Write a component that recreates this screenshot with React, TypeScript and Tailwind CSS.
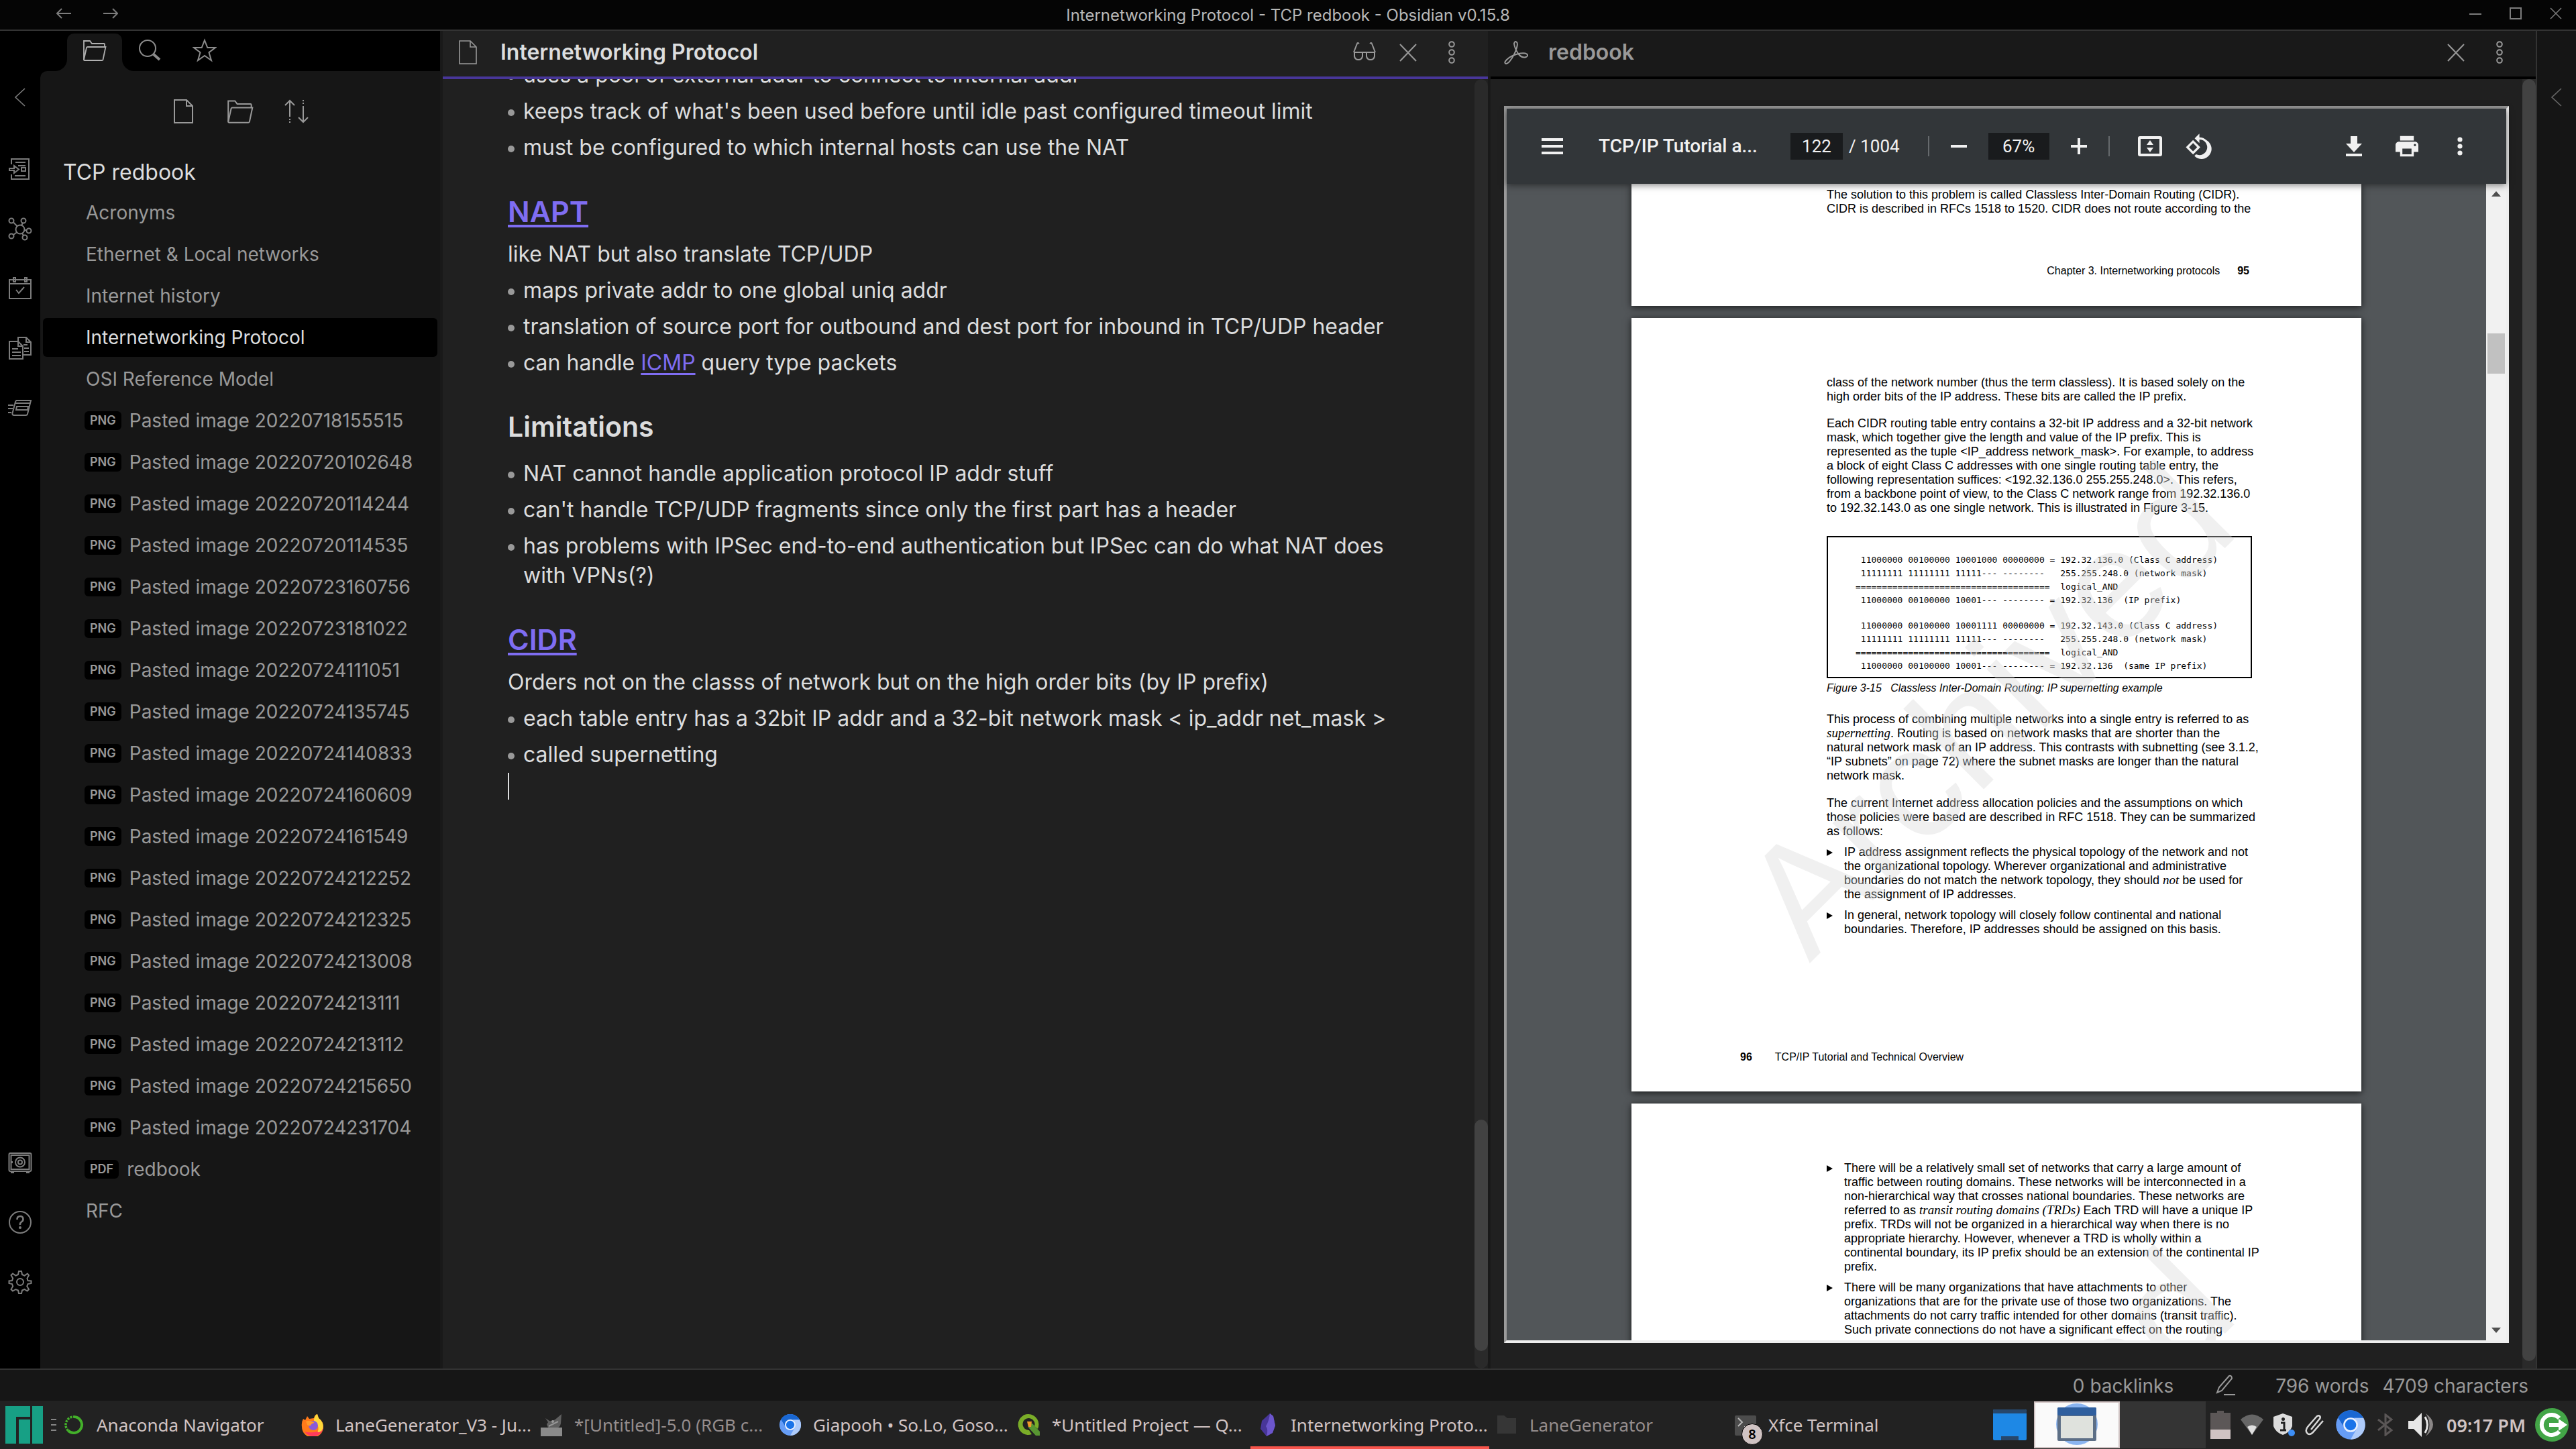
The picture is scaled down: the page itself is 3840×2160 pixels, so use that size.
import type { ReactNode } from "react";

const inter = "font-['Inter','Noto_Sans',sans-serif]";

/* ---------- line icons ---------- */

function Line({ children, size = 36, width = 2 }: { children: ReactNode; size?: number; width?: number }) {
  return (
    <svg
      width={size}
      height={size}
      viewBox="0 0 36 36"
      fill="none"
      stroke="currentColor"
      strokeWidth={width}
      aria-hidden="true"
      className="shrink-0"
    >
      {children}
    </svg>
  );
}

const FolderIcon = ({ size = 36 }: { size?: number }) => (
  <Line size={size} width={1.8}>
    <path d="M2 32V4h9l3 4h18q1 0 1 2v3" />
    <path d="M2 32 6 14q.3-1 1.500-1H34.500l-4 19q-.3 1-1.500 1H3q-1 0-1-1z" />
  </Line>
);
const SearchIcon = () => (
  <Line>
    <circle cx="15" cy="15" r="12" />
    <path d="M24 24l9 8" strokeWidth="4" />
  </Line>
);
const StarIcon = () => (
  <Line>
    <path d="M18 3l4.300 11H34l-9.500 7.200L28 33l-10-7-10 7 3.500-11.800L2 14h11.700z" />
  </Line>
);
const FileIcon = () => (
  <Line>
    <path d="M4 1h18l9 9v25H4z" />
    <path d="M22 1v9h9" />
  </Line>
);
const NoteIcon = () => (
  <Line width={1.6}>
    <path d="M5 1h16l9 9v25H5z" />
    <path d="M21 1v9h9" />
  </Line>
);
const SortIcon = () => (
  <Line>
    <path d="M8 2v24M8 29v2M8 33v2M1 9l7-7 7 7" />
    <path d="M28 34V10M28 7V5M28 3V1M21 27l7 7 7-7" />
  </Line>
);
const ChevronLeft = () => (
  <Line width={1.6}>
    <path d="M25 5 11 18l14 13" />
  </Line>
);
const QuickSwitchIcon = () => (
  <Line>
    <path d="M5 11V3h26v30H5v-7" />
    <path d="M11 8h15M15 13h11M10 28h16M2 17h7v-4l7 5.500-7 5.500v-4H2z" />
    <path d="M20 16h6v5h-6z" />
  </Line>
);
const GraphIcon = () => (
  <Line>
    <circle cx="18" cy="19" r="6.500" />
    <circle cx="5" cy="6" r="3.500" />
    <circle cx="23" cy="6" r="3.500" />
    <circle cx="5" cy="29" r="3.500" />
    <circle cx="31" cy="21" r="3.500" />
    <circle cx="25" cy="31" r="3.500" />
    <path d="M8 8.500l5.500 5.500M20 13l2-3.500M8 27l5.500-4M24.500 20h3M21 25l2 3" />
  </Line>
);
const DailyIcon = () => (
  <Line>
    <path d="M2 5h32v28H2zM2 11h32" />
    <path d="M8 2h3v6H8zM25 2h3v6h-3z" />
    <path d="M12 20l4 5 8-9" />
  </Line>
);
const TemplateIcon = () => (
  <Line>
    <path d="M2 8h13l7 7v19H2zM15 8v7h7" />
    <path d="M15 8V2h12l7 7v19H22M27 2v7h7" />
    <path d="M6 19h9M6 24h13M6 29h13M23 13h6M24 18h7M24 23h7" />
  </Line>
);
const CardsIcon = () => (
  <Line>
    <path d="M12 7h22l-5 20q-.5 2-2.500 2H9q-3 0-2.500-3L11 9q.5-2 2-2" />
    <path d="M11 11h22M13 16h17l-1 5H12z" />
    <path d="M0 14h8M0 19h7M0 25h5" />
  </Line>
);
const VaultIcon = () => (
  <Line>
    <rect x="1.500" y="4" width="33" height="27" rx="2" />
    <rect x="4.500" y="7" width="27" height="21" />
    <circle cx="18" cy="17.500" r="7" />
    <circle cx="18" cy="17.500" r="3" />
    <path d="M5 31v2h4M31 31v2h-4M6 16v3" />
  </Line>
);
const HelpIcon = () => (
  <Line>
    <circle cx="18" cy="18" r="16" />
    <path d="M13.500 14q0-5 4.500-5t4.500 4.500q0 2.500-2.500 4t-2 4.500" strokeWidth="2.600" />
    <circle cx="18" cy="26" r="1" fill="currentColor" />
  </Line>
);
const GearIcon = () => (
  <Line>
    <path d="M16 2h4l1 5 3.500 1.500L29 5.500l2 2.500-2.500 4.500L29.500 16l5 .5v3.500l-5 1-1.200 3.500L31 29l-2.500 2.500-4-2.500L21 30.500 20 35h-4l-1-4.500L11.500 29 7 31.500 4.500 29l2.700-4.500L6 21l-4.500-1v-3.500L6 16l1.200-3.500L4.500 8 7 5.500l4.500 3L15 7z" />
    <circle cx="18" cy="18" r="5" />
  </Line>
);
const GlassesIcon = () => (
  <Line>
    <path d="M2 18 7 5q.5-2 3 0M34 18 29 5q-.5-2-3 0M2 18h32" />
    <path d="M3 18h12v6q-1 5-6 5t-6-5zM21 18h12v6q-1 5-6 5t-6-5z" />
  </Line>
);
const CloseIcon = () => (
  <Line>
    <path d="M6 6l24 25M30 6 6 31" />
  </Line>
);
const DotsIcon = () => (
  <Line>
    <circle cx="18" cy="6" r="3.800" />
    <circle cx="18" cy="18" r="3.800" />
    <circle cx="18" cy="30" r="3.800" />
  </Line>
);
const PdfIcon = () => (
  <Line>
    <path d="M15 5q1-4 3.500-2.500Q21 4 19 11 16 22 8 32q-4 4-6 2.500T4 29q6-6 16-8.500 10-2.500 14 0 2.500 2.500-1 4.500-6 2-11-4Q16 13 15 5z" />
  </Line>
);
const PencilIcon = () => (
  <Line>
    <path d="M6 28 9 20 24 3q4-1 4 4L13 25zM16 31h17" />
  </Line>
);

/* ---------- sidebar ---------- */

function RibbonButton({ label, children }: { label: string; children: ReactNode }) {
  return (
    <button aria-label={label} className="flex h-9 w-9 items-center justify-center">
      {children}
    </button>
  );
}

function Ribbon() {
  return (
    <nav aria-label="Ribbon" className="flex w-[60px] shrink-0 flex-col items-center bg-black pt-[81px] pb-[111px] text-[#7c7c7c]">
      <RibbonButton label="Collapse sidebar"><ChevronLeft /></RibbonButton>
      <div className="mt-[71px] flex flex-col gap-[53px]">
        <RibbonButton label="Open quick switcher"><QuickSwitchIcon /></RibbonButton>
        <RibbonButton label="Open graph view"><GraphIcon /></RibbonButton>
        <RibbonButton label="Open daily note"><DailyIcon /></RibbonButton>
        <RibbonButton label="Insert template"><TemplateIcon /></RibbonButton>
        <RibbonButton label="Flashcards"><CardsIcon /></RibbonButton>
      </div>
      <div className="mt-auto flex flex-col gap-[53px]">
        <RibbonButton label="Open another vault"><VaultIcon /></RibbonButton>
        <RibbonButton label="Help"><HelpIcon /></RibbonButton>
        <RibbonButton label="Settings"><GearIcon /></RibbonButton>
      </div>
    </nav>
  );
}

type Entry = { name: string; tag?: string; active?: boolean };

const entries: Entry[] = [
  { name: "Acronyms" },
  { name: "Ethernet & Local networks" },
  { name: "Internet history" },
  { name: "Internetworking Protocol", active: true },
  { name: "OSI Reference Model" },
  ...[
    "20220718155515", "20220720102648", "20220720114244", "20220720114535", "20220723160756", "20220723181022",
    "20220724111051", "20220724135745", "20220724140833", "20220724160609", "20220724161549", "20220724212252",
    "20220724212325", "20220724213008", "20220724213111", "20220724213112", "20220724215650", "20220724231704",
  ].map((id) => ({ name: `Pasted image ${id}`, tag: "PNG" })),
  { name: "redbook", tag: "PDF" },
  { name: "RFC" },
];

function Sidebar() {
  return (
    <aside className="flex w-[596px] shrink-0 flex-col bg-black">
      <div role="tablist" className="flex h-[60px] shrink-0 items-end pl-10 text-[#8c8c8c]">
        <button role="tab" aria-selected="true" aria-label="Files" className="relative flex h-14 w-[82px] items-center justify-center rounded-t-[10px] bg-[#161616] pb-1.5 text-[#b0b0b0]">
          <FolderIcon />
          <svg aria-hidden="true" className="absolute bottom-0 -left-[18px]" width="18" height="18"><path d="M18 0v18H0A18 18 0 0 0 18 0z" fill="#161616" /></svg>
          <svg aria-hidden="true" className="absolute -right-[18px] bottom-0" width="18" height="18"><path d="M0 0v18h18A18 18 0 0 1 0 0z" fill="#161616" /></svg>
        </button>
        <button role="tab" aria-selected="false" aria-label="Search" className="flex h-14 w-[82px] items-center justify-center pb-1.5"><SearchIcon /></button>
        <button role="tab" aria-selected="false" aria-label="Starred" className="flex h-14 w-[82px] items-center justify-center pb-1.5"><StarIcon /></button>
      </div>
      <div className="flex grow flex-col rounded-tl-[10px] bg-[#161616] px-1">
        <div className="flex justify-center gap-11 pt-10 text-[#999999]">
          <button aria-label="New note" className="flex h-10 w-10 items-center justify-center"><FileIcon /></button>
          <button aria-label="New folder" className="flex h-10 w-10 items-center justify-center"><FolderIcon size={40} /></button>
          <button aria-label="Change sort order" className="flex h-10 w-10 items-center justify-center"><SortIcon /></button>
        </div>
        <h2 className="mt-[51px] mb-[11px] pl-[30px] text-[32px] leading-10 text-[#dcddde]">TCP redbook</h2>
        <ul className="flex flex-col gap-1">
          {entries.map((e) => (
            <li key={e.name}>
              <a
                href="#"
                className={
                  e.active
                    ? "flex h-[58px] items-center rounded-md bg-black pl-16 text-[28px] text-[#dcddde]"
                    : "flex h-[58px] items-center rounded-md pl-16 text-[28px] text-[#999999]"
                }
              >
                {e.tag && (
                  <span className="mr-3 -ml-0.5 rounded-md bg-black px-2 text-[18px] leading-7 font-semibold">{e.tag}</span>
                )}
                {e.name}
              </a>
            </li>
          ))}
        </ul>
      </div>
    </aside>
  );
}

/* ---------- editor ---------- */

function PaneActions({ children }: { children: ReactNode }) {
  return <div className="ml-auto flex gap-[29px] text-[#999999]">{children}</div>;
}

function Item({ children }: { children: ReactNode }) {
  return (
    <li className="flex py-[5px] whitespace-nowrap">
      <span aria-hidden="true" className="mt-[19px] mr-[13px] h-2.5 w-2.5 shrink-0 rounded-full bg-[#999999]" />
      <span>{children}</span>
    </li>
  );
}

function Heading({ children }: { children: ReactNode }) {
  return (
    <h2 className="mt-[37px] mb-[6px] text-[43px] leading-[62px] font-semibold">
      <a href="#" className="text-[#7f6df2] underline decoration-4 underline-offset-4">{children}</a>
    </h2>
  );
}

function Editor() {
  return (
    <section className="flex min-w-0 flex-1 flex-col bg-[#202020]">
      <header className="flex h-[72px] shrink-0 items-center border-b-4 border-[#483699] pr-9 pb-1 pl-5 text-[#999999]">
        <NoteIcon />
        <h1 className="ml-[30px] text-[32px] leading-10 font-semibold text-[#dcddde]">Internetworking Protocol</h1>
        <PaneActions>
          <button aria-label="Reading view"><GlassesIcon /></button>
          <button aria-label="Close note"><CloseIcon /></button>
          <button aria-label="More options"><DotsIcon /></button>
        </PaneActions>
      </header>
      <div className="flex grow overflow-hidden">
        <article className="-mt-[33px] min-w-0 flex-1 pl-[97px] text-[32px] leading-[44px] text-[#dcddde]">
          <ul>
            <Item>uses a pool of external addr to connect to internal addr</Item>
            <Item>keeps track of what's been used before until idle past configured timeout limit</Item>
            <Item>must be configured to which internal hosts can use the NAT</Item>
          </ul>
          <Heading>NAPT</Heading>
          <p className="py-[5px]">like NAT but also translate TCP/UDP</p>
          <ul>
            <Item>maps private addr to one global uniq addr</Item>
            <Item>translation of source port for outbound and dest port for inbound in TCP/UDP header</Item>
            <Item>
              can handle <a href="#" className="text-[#7f6df2] underline decoration-3 underline-offset-4">ICMP</a> query type packets
            </Item>
          </ul>
          <h3 className="mt-10 mb-[15px] text-[41px] leading-[56px] font-semibold">Limitations</h3>
          <ul>
            <Item>NAT cannot handle application protocol IP addr stuff</Item>
            <Item>can't handle TCP/UDP fragments since only the first part has a header</Item>
            <Item>
              has problems with IPSec end-to-end authentication but IPSec can do what NAT does
              <br />
              with VPNs(?)
            </Item>
          </ul>
          <Heading>CIDR</Heading>
          <p className="py-[5px]">Orders not on the classs of network but on the high order bits (by IP prefix)</p>
          <ul>
            <Item>each table entry has a 32bit IP addr and a 32-bit network mask &lt; ip_addr net_mask &gt;</Item>
            <Item>called supernetting</Item>
          </ul>
          <div aria-hidden="true" className="h-10 w-0.5 bg-[#dcddde]" />
        </article>
        <div aria-hidden="true" className="flex w-5 flex-col justify-end rounded-full bg-[#2a2a2a] pb-[26px]">
          <div className="h-[345px] rounded-full bg-[#424242]" />
        </div>
      </div>
    </section>
  );
}

/* ---------- PDF viewer ---------- */

function ToolButton({ label, children }: { label: string; children: ReactNode }) {
  return (
    <button aria-label={label} className="flex h-12 w-12 shrink-0 items-center justify-center">
      <svg width="48" height="48" viewBox="0 0 24 24" fill="currentColor" aria-hidden="true">{children}</svg>
    </button>
  );
}

function Toolbar() {
  return (
    <div className="relative z-10 flex h-28 shrink-0 items-center bg-[#323639] pr-[45px] pl-11 font-['Roboto',sans-serif] text-[26px] text-[#f1f1f1] shadow-[0_2px_10px_rgba(0,0,0,0.5)]">
      <ToolButton label="Menu"><path d="M4 6h16v2H4zM4 11h16v2H4zM4 16h16v2H4z" /></ToolButton>
      <span className="ml-[45px] w-[286px] truncate text-[28px] font-medium">TCP/IP Tutorial a...</span>
      <input aria-label="Page number" defaultValue="122" className="h-10 w-[78px] bg-[#191b1d] text-center" />
      <span className="ml-[9px]">/ 1004</span>
      <span aria-hidden="true" className="ml-[42px] h-[30px] w-0.5 bg-[#666a6d]" />
      <span className="w-5" />
      <ToolButton label="Zoom out"><path d="M6 11h12v2H6z" /></ToolButton>
      <input aria-label="Zoom level" defaultValue="67%" className="ml-5 h-10 w-[91px] bg-[#191b1d] text-center" />
      <span className="w-5" />
      <ToolButton label="Zoom in"><path d="M11 6h2v5h5v2h-5v5h-2v-5H6v-2h5z" /></ToolButton>
      <span aria-hidden="true" className="ml-5 h-[30px] w-0.5 bg-[#666a6d]" />
      <span className="w-9" />
      <ToolButton label="Fit to page"><path d="M4.500 4.500h15q1.500 0 1.500 1.500v12q0 1.500-1.500 1.500h-15Q3 19.500 3 18V6q0-1.500 1.500-1.500zM5 6.500v11h14v-11zM12 7.500l2.500 3.500h-5zM12 16.500 9.500 13h5z" /></ToolButton>
      <span className="w-6" />
      <ToolButton label="Rotate">
        <g transform="translate(2 2) scale(0.83)">
          <path d="M7.340 6.410.860 12.900l6.490 6.480 6.490-6.480zM3.690 12.900l3.660-3.660L11 12.900l-3.660 3.660zM19.360 6.640A8.950 8.950 0 0 0 13 4V.760L8.760 5 13 9.240V6a7 7 0 1 1-2.980 13.320l-1.490 1.490A9 9 0 1 0 19.360 6.640z" />
        </g>
      </ToolButton>
      <div className="ml-auto flex gap-[31px]">
        <ToolButton label="Download"><path d="M18 10h-3.500V4.500h-5V10H6l6 6.500zM6 17.500v2h12v-2z" /></ToolButton>
        <ToolButton label="Print">
          <g transform="translate(1.8 1.8) scale(0.85)">
            <path d="M19 8H5c-1.660 0-3 1.340-3 3v6h4v4h12v-4h4v-6c0-1.660-1.340-3-3-3zm-3 11H8v-5h8zm3-7a1 1 0 1 1 0-2 1 1 0 0 1 0 2zM18 3H6v4h12z" />
          </g>
        </ToolButton>
        <ToolButton label="More"><circle cx="12" cy="7" r="1.800" /><circle cx="12" cy="12" r="1.800" /><circle cx="12" cy="17" r="1.800" /></ToolButton>
      </div>
    </div>
  );
}

function Watermark() {
  return (
    <div aria-hidden="true" className="pointer-events-none absolute top-[583px] left-[530px] flex h-0 w-0 items-center justify-center">
      <span className="-rotate-45 text-[234px] leading-none text-[rgba(214,214,214,0.37)]">Archived</span>
    </div>
  );
}

function Bullet({ children }: { children: ReactNode }) {
  return (
    <li className="flex">
      <svg width="9" height="10" className="mt-1.5 mr-[17px] shrink-0" aria-hidden="true"><path d="M0 0 9 5 0 10z" /></svg>
      <span>{children}</span>
    </li>
  );
}

const Term = ({ children }: { children: ReactNode }) => (
  <em className="font-['Liberation_Serif',serif] text-[19px] leading-none">{children}</em>
);

const maskRows = (addr: string, host: string, prefix: string) =>
  [
    ` ${addr} = ${host} (Class C address)`,
    " 11111111 11111111 11111--- --------   255.255.248.0 (network mask)",
    "=====================================  logical_AND",
    ` 11000000 00100000 10001--- -------- = 192.32.136  (${prefix})`,
  ].join("\n");

const sheet = "relative w-[1088px] shrink-0 overflow-hidden bg-white shadow-[0_2px_10px_rgba(0,0,0,0.7)]";

function Pages() {
  return (
    <div className="flex min-w-0 flex-1 flex-col items-center gap-[18px] overflow-hidden font-['Liberation_Sans',Arial,sans-serif] text-[18px] leading-[21px] whitespace-nowrap text-black">
      <section className={sheet}>
        <p className="mt-[6px] pl-[291px]">
          The solution to this problem is called Classless Inter-Domain Routing (CIDR).<br />
          CIDR is described in RFCs 1518 to 1520. CIDR does not route according to the
        </p>
        <footer className="mt-[71px] mb-[42px] flex justify-end gap-[26px] pr-[167px] text-[16px]">
          <span>Chapter 3. Internetworking protocols</span>
          <b>95</b>
        </footer>
      </section>

      <section className={sheet}>
        <div className="pt-[86px] pr-[163px] pl-[291px]">
          <p>
            class of the network number (thus the term classless). It is based solely on the<br />
            high order bits of the IP address. These bits are called the IP prefix.
          </p>
          <p className="mt-[19px]">
            Each CIDR routing table entry contains a 32-bit IP address and a 32-bit network<br />
            mask, which together give the length and value of the IP prefix. This is<br />
            represented as the tuple &lt;IP_address network_mask&gt;. For example, to address<br />
            a block of eight Class C addresses with one single routing table entry, the<br />
            following representation suffices: &lt;192.32.136.0 255.255.248.0&gt;. This refers,<br />
            from a backbone point of view, to the Class C network range from 192.32.136.0<br />
            to 192.32.143.0 as one single network. This is illustrated in Figure 3-15.
          </p>
          <figure className="mt-[31px]">
            <div className="flex h-[212px] flex-col justify-end gap-[18px] border-2 border-black pb-[6px] pl-[41px] font-['DejaVu_Sans_Mono','Liberation_Mono',monospace] text-[13px] leading-5">
              <pre className="font-[inherit]">{maskRows("11000000 00100000 10001000 00000000", "192.32.136.0", "IP prefix")}</pre>
              <pre className="font-[inherit]">{maskRows("11000000 00100000 10001111 00000000", "192.32.143.0", "same IP prefix")}</pre>
            </div>
            <figcaption className="mt-1 text-[16px] italic">
              Figure 3-15 &nbsp; Classless Inter-Domain Routing: IP supernetting example
            </figcaption>
          </figure>
          <p className="mt-[26px]">
            This process of combining multiple networks into a single entry is referred to as<br />
            <Term>supernetting</Term>. Routing is based on network masks that are shorter than the<br />
            natural network mask of an IP address. This contrasts with subnetting (see 3.1.2,<br />
            “IP subnets” on page 72) where the subnet masks are longer than the natural<br />
            network mask.
          </p>
          <p className="mt-5">
            The current Internet address allocation policies and the assumptions on which<br />
            those policies were based are described in RFC 1518. They can be summarized<br />
            as follows:
          </p>
          <ul className="mt-2.5 flex flex-col gap-2.5">
            <Bullet>
              IP address assignment reflects the physical topology of the network and not<br />
              the organizational topology. Wherever organizational and administrative<br />
              boundaries do not match the network topology, they should <Term>not</Term> be used for<br />
              the assignment of IP addresses.
            </Bullet>
            <Bullet>
              In general, network topology will closely follow continental and national<br />
              boundaries. Therefore, IP addresses should be assigned on this basis.
            </Bullet>
          </ul>
        </div>
        <footer className="mt-[169px] mb-[41px] flex gap-[34px] pl-[162px] text-[16px]">
          <b>96</b>
          <span>TCP/IP Tutorial and Technical Overview</span>
        </footer>
        <Watermark />
      </section>

      <section className={sheet}>
        <ul className="flex min-h-[1152px] flex-col gap-2.5 pt-[86px] pl-[291px]">
          <Bullet>
            There will be a relatively small set of networks that carry a large amount of<br />
            traffic between routing domains. These networks will be interconnected in a<br />
            non-hierarchical way that crosses national boundaries. These networks are<br />
            referred to as <Term>transit routing domains (TRDs)</Term> Each TRD will have a unique IP<br />
            prefix. TRDs will not be organized in a hierarchical way when there is no<br />
            appropriate hierarchy. However, whenever a TRD is wholly within a<br />
            continental boundary, its IP prefix should be an extension of the continental IP<br />
            prefix.
          </Bullet>
          <Bullet>
            There will be many organizations that have attachments to other<br />
            organizations that are for the private use of those two organizations. The<br />
            attachments do not carry traffic intended for other domains (transit traffic).<br />
            Such private connections do not have a significant effect on the routing
          </Bullet>
        </ul>
        <Watermark />
      </section>
    </div>
  );
}

function PdfPane() {
  return (
    <section className="flex min-w-0 flex-1 flex-col bg-[#202020]">
      <header className="flex h-[72px] shrink-0 items-center border-b-4 border-black bg-[#191919] pr-9 pb-1 pl-5 text-[#999999]">
        <PdfIcon />
        <h1 className="ml-[30px] text-[32px] leading-10 font-semibold">redbook</h1>
        <PaneActions>
          <button aria-label="Close redbook"><CloseIcon /></button>
          <button aria-label="More options"><DotsIcon /></button>
        </PaneActions>
      </header>
      <div className="flex min-h-0 grow">
        <div className="mt-10 mr-5 mb-[38px] ml-5 flex min-w-0 flex-1 flex-col border-4 border-t-[#9a9a9a] border-r-[#eeeeee] border-b-[#eeeeee] border-l-[#9a9a9a] bg-[#525659]">
          <Toolbar />
          <div className="flex min-h-0 grow">
            <Pages />
            <div aria-hidden="true" className="flex w-[30px] flex-col items-center justify-between bg-[#f1f1f1] py-[11px]">
              <svg width="14" height="8"><path d="M7 0l7 8H0z" fill="#505050" /></svg>
              <div className="mt-[204px] mb-auto h-[60px] w-[26px] bg-[#c1c1c1]" />
              <svg width="14" height="8"><path d="M0 0h14L7 8z" fill="#505050" /></svg>
            </div>
          </div>
        </div>
        <div aria-hidden="true" className="w-5 bg-[#2a2a2a] pb-[11px]">
          <div className="h-full rounded-full bg-[#424242]" />
        </div>
      </div>
    </section>
  );
}

/* ---------- status bar and desktop panel ---------- */

function StatusBar() {
  return (
    <footer className="flex h-12 shrink-0 items-center justify-end border-t-2 border-[#333333] bg-[#161616] pt-0.5 pr-[71px] text-[28px] leading-none text-[#999999]">
      <span>0 backlinks</span>
      <button aria-label="Editing mode" className="mr-[57px] ml-[59px]"><PencilIcon /></button>
      <span className="mr-[20px]">796 words</span>
      <span>4709 characters</span>
    </footer>
  );
}

const Chromium = ({ size = 34 }: { size?: number }) => (
  <svg width={size} height={size} viewBox="0 0 36 36" aria-hidden="true">
    <circle cx="18" cy="18" r="17" fill="#669df6" />
    <path d="M3.300 9.500A17 17 0 0 1 32.700 9.500L33 10H18L10.500 21z" fill="#1967d2" />
    <path d="M33 10a17 17 0 0 1-15 25l7.500-13Q27 14 22 10z" fill="#aecbfa" />
    <circle cx="18" cy="18" r="8.500" fill="#e8f0fe" />
    <circle cx="18" cy="18" r="6.500" fill="#1a73e8" />
  </svg>
);

const AnacondaLogo = () => (
  <svg width="32" height="32" viewBox="0 0 32 32" fill="none" stroke="#43b02a" aria-hidden="true">
    <path d="M16 4a12 12 0 1 1-8.500 20.500" strokeWidth="4" />
    <path d="M7.500 24.500A12 12 0 0 1 16 4" strokeWidth="3.500" strokeDasharray="3 1.500" />
  </svg>
);
const FirefoxLogo = () => (
  <svg width="34" height="34" viewBox="0 0 34 34" aria-hidden="true">
    <path d="M3 8l3 2 3-6 3 4 7-1q1-5 5-6l2 6q7 5 7 13A15.500 15.500 0 0 1 1 20Q0 13 3 8z" fill="#ff7a1a" />
    <path d="M5 27a15.500 15.500 0 0 0 26 0q2-4 2-8-3 8-14 9-9 1-14-1z" fill="#ff3b5c" />
    <path d="M24 1l2 6q8 6 6.500 15-2 6-8 6 3-8-2-13-5-4-3-8 1-5 4.500-6z" fill="#ffd83a" />
    <circle cx="18" cy="18" r="7" fill="#8a5ad8" />
    <path d="M7 12q4-2 9 0 4 1 3 2-4 1-5 4-3 1-5-1z" fill="#ff9a2a" />
  </svg>
);
const GimpLogo = () => (
  <svg width="32" height="34" viewBox="0 0 32 34" aria-hidden="true">
    <path d="M7 7l6 4q6 1 11-4l7-6-1 14q-1 6-8 8h-8q-4-2-5-7l2-3z" fill="#5f5f5f" />
    <path d="M0 21h32v13H0z" fill="#8a8a8a" />
    <path d="M12 19l14-7" stroke="#949494" strokeWidth="2" />
    <circle cx="18" cy="12" r="2" fill="#9a9a9a" />
  </svg>
);
const QgisLogo = () => (
  <svg width="34" height="34" viewBox="0 0 34 34" aria-hidden="true">
    <path d="M16 1a15 15.500 0 1 0 5 30l-4-6a9 9 0 1 1 8-6l5 4A15.500 15.500 0 0 0 16 1z" fill="#7aad28" />
    <path d="M16 15h6l11 12v6h-6L16 21z" fill="#589632" />
    <path d="M14 12h7l-1 8h-4z" fill="#f09a2a" />
  </svg>
);
const ObsidianLogo = () => (
  <svg width="32" height="36" viewBox="0 0 32 36" aria-hidden="true">
    <path d="M19 1 7 12 5 24l9 11 9-5 4-11-3-14z" fill="#483699" />
    <path d="M19 1l5 4 3 14-4 11-9 5q3-10-1-15 5-8 6-19z" fill="#6c56cc" />
  </svg>
);
const FolderLogo = () => (
  <svg width="30" height="28" viewBox="0 0 30 28" aria-hidden="true">
    <path d="M1 0h10l5 4h13v23H1z" fill="#363636" />
  </svg>
);
const TerminalLogo = () => (
  <span className="relative flex">
    <svg width="32" height="32" viewBox="0 0 32 32" aria-hidden="true">
      <rect y="2" width="32" height="30" rx="2" fill="#4c4c4c" />
      <path d="M5 6l6 6-6 6M14 19h8" stroke="#b8b8b8" strokeWidth="2" fill="none" />
    </svg>
    <span className="absolute top-[14px] left-[10px] flex h-8 w-8 items-center justify-center rounded-full border border-black bg-[#d0c3c3] text-[20px] leading-none font-semibold text-black">8</span>
  </span>
);

type Task = { label: string; icon: ReactNode; dim?: boolean; active?: boolean };

const tasks: Task[] = [
  { label: "Anaconda Navigator", icon: <AnacondaLogo /> },
  { label: "LaneGenerator_V3 - Ju...", icon: <FirefoxLogo /> },
  { label: "*[Untitled]-5.0 (RGB c...", icon: <GimpLogo />, dim: true },
  { label: "Giapooh • So.Lo, Goso...", icon: <Chromium /> },
  { label: "*Untitled Project — Q...", icon: <QgisLogo /> },
  { label: "Internetworking Proto...", icon: <ObsidianLogo />, active: true },
  { label: "LaneGenerator", icon: <FolderLogo />, dim: true },
  { label: "Xfce Terminal", icon: <TerminalLogo /> },
];

function TaskButton({ task }: { task: Task }) {
  return (
    <button
      className={
        task.active
          ? "flex h-full w-[356px] items-center border-y-4 border-t-transparent border-b-[#f8544b] pl-2 text-[#d0c3c3]"
          : task.dim
            ? "flex h-full w-[356px] items-center border-y-4 border-transparent pl-2 text-[#958d8d]"
            : "flex h-full w-[356px] items-center border-y-4 border-transparent pl-2 text-[#d0c3c3]"
      }
    >
      <span className="flex w-9 shrink-0 justify-center">{task.icon}</span>
      <span className="ml-4 whitespace-nowrap">{task.label}</span>
    </button>
  );
}

function Tray() {
  return (
    <div className="flex shrink-0 items-center gap-[14px] pr-[11px] pl-[7px]">
      <svg width="30" height="42" viewBox="0 0 30 42" aria-label="Battery" role="img">
        <path d="M10 0h10v3h10v25H0V3h10z" fill="#5c5757" />
        <path d="M0 28h30v14H0z" fill="#d0c3c3" />
      </svg>
      <svg width="36" height="32" viewBox="0 0 36 32" aria-label="Wireless" role="img">
        <path d="M1 8Q18-7 35 8L18 31z" fill="#666666" />
        <path d="M11 19q7-5 14 0l-7 12z" fill="#e0e0e0" />
      </svg>
      <svg width="32" height="34" viewBox="0 0 32 34" aria-label="Updates" role="img">
        <path d="M14 0l14 5v14q-3 9-14 13Q3 28 0 19V5z" fill="#dcdcdc" />
        <path d="M11 14h5v11M10 25h9" stroke="#222222" strokeWidth="3" fill="none" />
        <circle cx="14.500" cy="8.500" r="2.500" fill="#222222" />
        <circle cx="27" cy="29" r="5" fill="#3d8ef5" />
      </svg>
      <svg width="32" height="34" viewBox="0 0 32 34" fill="none" stroke="#d8d8d8" strokeWidth="2.500" aria-label="Clipboard" role="img">
        <path d="M10 24 22 9q3-3 1-5t-5 1L5 20q-4 5-1 9t8 0L28 11" />
      </svg>
      <Chromium size={46} />
      <svg width="30" height="34" viewBox="0 0 30 34" fill="none" stroke="#5a5656" strokeWidth="3" aria-label="Bluetooth" role="img">
        <path d="M4 9l20 16-9 7V2l9 7L4 25" />
      </svg>
      <svg width="44" height="38" viewBox="0 0 44 38" aria-label="Volume" role="img" className="ml-1">
        <path d="M1 13h8L21 1v36L9 25H1z" fill="#e6e6e6" />
        <path d="M26 7q7 12 0 24" stroke="#e6e6e6" strokeWidth="3" fill="none" />
        <path d="M27 2q22 16 0 34 11-17 0-34z" fill="#8a8686" />
      </svg>
      <time className="text-[27px] font-semibold text-[#d0c3c3]">09:17 PM</time>
      <button aria-label="Log out">
        <svg width="50" height="50" viewBox="0 0 50 50" aria-hidden="true">
          <circle cx="25" cy="25" r="25" fill="#43a547" />
          <path d="M36 15a15 15 0 1 0 0 20" stroke="#ffffff" strokeWidth="6" fill="none" />
          <path d="M21 22h14v-6l13 9-13 9v-6H21z" fill="#ffffff" />
        </svg>
      </button>
    </div>
  );
}

function Taskbar() {
  return (
    <footer className="flex h-[72px] shrink-0 items-center bg-[#222222] pl-2 font-['Noto_Sans',sans-serif] text-[26px] leading-none">
      <button aria-label="Applications">
        <svg width="56" height="56" viewBox="0 0 56 56" fill="#17a085" aria-hidden="true">
          <path d="M0 0h37v16H16v40H0zM20 20h17v36H20zM40 0h16v56H40z" />
        </svg>
      </button>
      <svg width="8" height="18" className="ml-3 shrink-0" stroke="#858585" strokeWidth="2" aria-hidden="true">
        <path d="M0 1h8M0 9h8M0 17h8" />
      </svg>
      <nav aria-label="Open windows" className="flex h-full">
        {tasks.map((t) => (
          <TaskButton key={t.label} task={t} />
        ))}
      </nav>
      <svg width="50" height="46" viewBox="0 0 50 46" aria-label="Show desktop" role="img" className="ml-auto">
        <rect width="50" height="46" rx="2" fill="#1e88e5" />
        <path d="M0 2q0-2 2-2h46q2 0 2 2v4H0zM12 40h26v6H12z" fill="#27476b" />
      </svg>
      <div className="ml-[11px] flex h-[70px] w-32 items-center justify-center border-2 border-[#d0c3c3] bg-[#fafafa]">
        <svg width="62" height="66" viewBox="0 0 62 66" aria-hidden="true">
          <circle cx="31" cy="32" r="31" fill="#8ab4f0" />
          <rect x="2" y="7" width="58" height="50" rx="2" fill="#5d6f86" />
          <rect x="2" y="7" width="58" height="12" rx="2" fill="#2f5f9e" />
          <rect x="7" y="20" width="48" height="33" fill="#dfe2dd" />
        </svg>
      </div>
      <div className="h-[70px] w-32 bg-[#343434]" />
      <Tray />
    </footer>
  );
}

/* ---------- window ---------- */

function TitleBar() {
  return (
    <header className="grid h-[46px] shrink-0 grid-cols-[1fr_auto_1fr] items-center border-b-2 border-[#333333] bg-[#050505] pb-1 text-[#7c7c7c]">
      <div className="flex gap-12 pl-[84px]">
        <button aria-label="Back">
          <svg width="22" height="16" fill="none" stroke="currentColor" strokeWidth="2" aria-hidden="true"><path d="M22 8H2M8 1 1 8l7 7" /></svg>
        </button>
        <button aria-label="Forward">
          <svg width="22" height="16" fill="none" stroke="currentColor" strokeWidth="2" aria-hidden="true"><path d="M0 8h20M14 1l7 7-7 7" /></svg>
        </button>
      </div>
      <h1 className="pt-1.5 text-[24px] leading-none text-[#b8b8b8]">Internetworking Protocol - TCP redbook - Obsidian v0.15.8</h1>
      <div className="flex justify-end gap-[42px] pr-[21px]">
        <button aria-label="Minimize">
          <svg width="18" height="18" fill="none" stroke="currentColor" strokeWidth="2" aria-hidden="true"><path d="M0 10h18" /></svg>
        </button>
        <button aria-label="Maximize">
          <svg width="18" height="18" fill="none" stroke="currentColor" strokeWidth="2" aria-hidden="true"><path d="M1 1h16v16H1z" /></svg>
        </button>
        <button aria-label="Close window">
          <svg width="18" height="18" fill="none" stroke="currentColor" strokeWidth="1.500" aria-hidden="true"><path d="M1 1l16 16M17 1 1 17" /></svg>
        </button>
      </div>
    </header>
  );
}

export default function App() {
  return (
    <div className={`${inter} flex h-screen flex-col overflow-hidden bg-[#161616]`}>
      <TitleBar />
      <main className="flex min-h-0 grow">
        <Ribbon />
        <Sidebar />
        <div className="w-1 shrink-0 bg-[#191919]" />
        <Editor />
        <div className="w-1 shrink-0 bg-[#191919]" />
        <PdfPane />
        <nav aria-label="Right ribbon" className="flex w-[60px] shrink-0 justify-center border-l-2 border-[#333333] bg-[#151515] pt-[81px] text-[#666666]">
          <RibbonButton label="Expand right sidebar"><ChevronLeft /></RibbonButton>
        </nav>
      </main>
      <StatusBar />
      <Taskbar />
    </div>
  );
}
